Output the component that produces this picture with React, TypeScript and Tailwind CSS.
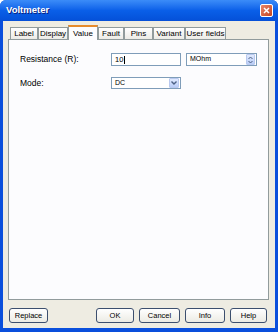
const tabs = [
  { label: "Label", w: "w-[28px]" },
  { label: "Display", w: "w-[30px]" },
  { label: "Value", w: "w-[30px]" },
  { label: "Fault", w: "w-[26px]" },
  { label: "Pins", w: "w-[29px]" },
  { label: "Variant", w: "w-[32px]" },
  { label: "User fields", w: "w-[41px]" },
];

const XpButton = ({ label, className = "" }: { label: string; className?: string }) => (
  <button
    className={`h-[15px] rounded-[3px] border border-[#3c4f6e] bg-gradient-to-b from-white to-[#ecebe4] text-[7.5px] leading-none text-black ${className}`}
  >
    {label}
  </button>
);

const DropArrow = () => (
  <div className="flex h-[10px] w-[10px] items-center justify-center rounded-[1px] border border-[#b9c9ef] bg-gradient-to-b from-[#e1eafe] to-[#bacdf7]">
    <svg width="6" height="4" viewBox="0 0 6 4">
      <path d="M0.5 0.5 L3 3 L5.5 0.5" fill="none" stroke="#4d6185" strokeWidth="1.4" />
    </svg>
  </div>
);

const SpinArrow = () => (
  <div className="flex h-[11px] w-[9px] items-center justify-center rounded-[1px] border border-[#b9c9ef] bg-gradient-to-b from-[#e1eafe] to-[#bacdf7]">
    <svg width="5" height="8" viewBox="0 0 5 8">
      <path d="M0.5 3 L2.5 1 L4.5 3" fill="none" stroke="#4d6185" strokeWidth="1" />
      <path d="M0.5 5 L2.5 7 L4.5 5" fill="none" stroke="#4d6185" strokeWidth="1" />
    </svg>
  </div>
);

export default function App() {
  return (
    <div
      className="flex h-[332px] w-[278px] flex-col overflow-hidden rounded-t-[6px] bg-[#0a4fdc] text-black"
      style={{ fontFamily: '"Liberation Sans", Arial, sans-serif' }}
    >
      {/* title bar */}
      <div className="flex h-[21px] shrink-0 items-center justify-between bg-gradient-to-b from-[#3b8cf8] via-[#0a5fe8] to-[#0550d8] pl-[6px] pr-[5px]">
        <span className="text-[9.5px] font-bold text-white [text-shadow:1px_1px_0_#0a1f80]">Voltmeter</span>
        <div className="flex h-[13px] w-[13px] items-center justify-center rounded-[2px] border border-white bg-gradient-to-br from-[#e8866a] to-[#c4431a]">
          <svg width="7" height="7" viewBox="0 0 7 7">
            <path d="M1 1 L6 6 M6 1 L1 6" stroke="white" strokeWidth="1.5" />
          </svg>
        </div>
      </div>

      {/* body */}
      <div className="mx-[3px] mb-[4px] flex flex-1 flex-col bg-[#eeece2] pl-[5px] pr-[6px] pt-[4px]">
        <div className="flex items-end pl-[2px]">
          {tabs.map((t) =>
            t.label === "Value" ? (
              <div
                key={t.label}
                className={`relative z-10 -mb-px flex h-[15px] items-center justify-center whitespace-nowrap border-x border-t-2 border-[#919b9c] border-t-[#e68b2c] bg-[#fcfcfe] text-[8px] ${t.w}`}
              >
                {t.label}
              </div>
            ) : (
              <div
                key={t.label}
                className={`flex h-[12px] items-center justify-center whitespace-nowrap border-x border-t border-[#919b9c] bg-gradient-to-b from-white to-[#ecebe6] text-[8px] ${t.w}`}
              >
                {t.label}
              </div>
            )
          )}
        </div>

        <div className="flex h-[261px] flex-col gap-[11px] border border-[#919b9c] bg-[#fcfcfe] pl-[11px] pt-[13px]">
          <div className="flex items-center">
            <span className="w-[91px] text-[8.5px]">Resistance (R):</span>
            <div className="flex h-[13px] w-[70px] items-center border border-[#7f9db9] bg-white pl-[3px] text-[7.5px]">
              10<span className="ml-px h-[8px] w-px bg-black" />
            </div>
            <div className="ml-[5px] flex h-[13px] w-[71px] items-center justify-between border border-[#7f9db9] bg-white pl-[3px] pr-px text-[7px]">
              MOhm
              <SpinArrow />
            </div>
          </div>
          <div className="flex items-center">
            <span className="w-[91px] text-[8.5px]">Mode:</span>
            <div className="flex h-[12px] w-[70px] items-center justify-between border border-[#7f9db9] bg-white pl-[3px] pr-px text-[7px]">
              DC
              <DropArrow />
            </div>
          </div>
        </div>

        <div className="mt-[8px] flex items-center">
          <XpButton label="Replace" className="ml-px w-[39px]" />
          <div className="ml-auto mr-[2px] flex gap-[5px]">
            <XpButton label="OK" className="w-[38px]" />
            <XpButton label="Cancel" className="w-[41px]" />
            <XpButton label="Info" className="w-[40px]" />
            <XpButton label="Help" className="w-[37px]" />
          </div>
        </div>
      </div>
    </div>
  );
}
